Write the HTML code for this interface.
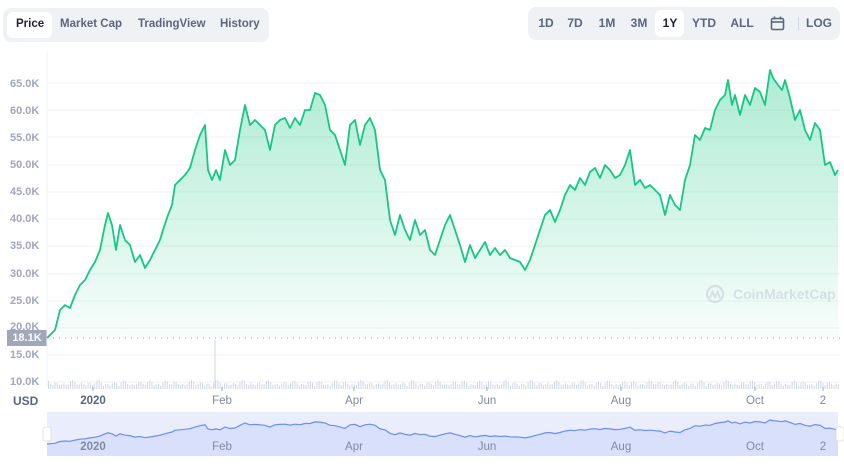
<!DOCTYPE html>
<html><head><style>
body{margin:0;width:844px;height:464px;background:#fff;font-family:"Liberation Sans",sans-serif;overflow:hidden;position:relative}
.tabs{position:absolute;left:3px;top:8px;height:34px;width:266px;background:#eff2f5;border-radius:8px}
.tabs span{position:absolute;top:16px;font-size:11.5px;font-weight:bold;color:#58667e;transform:translateY(-50%)}
.sel{position:absolute;background:#fff;border-radius:6px}
.rt{position:absolute;left:528px;top:7px;width:312px;height:33px;background:#eff2f5;border-radius:8px}
.rt span{position:absolute;top:16px;font-size:12px;font-weight:bold;color:#58667e;transform:translate(-50%,-50%)}
.yl{position:absolute;left:10px;font-size:11px;color:#a1a7bb;font-weight:bold;transform:translateY(-50%)}
.xl{position:absolute;top:395px;font-size:11.5px;color:#808a9d;transform:translateX(-50%)}
</style></head><body>
<div class="tabs">
<div class="sel" style="left:4px;top:4px;width:45px;height:26px"></div>
<span style="left:13px;color:#222531">Price</span>
<span style="left:57px">Market Cap</span>
<span style="left:135px">TradingView</span>
<span style="left:217px">History</span>
</div>
<div class="rt">
<div class="sel" style="left:127px;top:3px;width:29px;height:27px"></div>
<span style="left:18px">1D</span><span style="left:47px">7D</span><span style="left:79px">1M</span><span style="left:111px">3M</span><span style="left:142px;color:#222531">1Y</span><span style="left:176px">YTD</span><span style="left:214px">ALL</span>
<svg style="position:absolute;left:242px;top:9px" width="15" height="15" viewBox="0 0 15 15" fill="none" stroke="#58667e" stroke-width="1.6"><rect x="1.5" y="2.5" width="12" height="11" rx="1.5"/><line x1="1.5" y1="6" x2="13.5" y2="6"/><line x1="4.5" y1="0.5" x2="4.5" y2="3.5"/><line x1="10.5" y1="0.5" x2="10.5" y2="3.5"/></svg>
<div style="position:absolute;left:270px;top:10px;width:1px;height:13px;background:#cfd6e4"></div>
<span style="left:291px">LOG</span>
</div>
<div class="yl" style="top:84px">65.0K</div><div class="yl" style="top:111px">60.0K</div><div class="yl" style="top:138px">55.0K</div><div class="yl" style="top:165px">50.0K</div><div class="yl" style="top:192px">45.0K</div><div class="yl" style="top:219px">40.0K</div><div class="yl" style="top:246px">35.0K</div><div class="yl" style="top:274px">30.0K</div><div class="yl" style="top:301px">25.0K</div><div class="yl" style="top:327px">20.0K</div><div class="yl" style="top:355px">15.0K</div><div class="yl" style="top:382px">10.0K</div>
<div style="position:absolute;left:7px;top:330px;width:40px;height:16px;background:#a1a7bb;color:#fff;font-size:11px;font-weight:bold;line-height:16px;text-align:center">18.1K</div>
<div style="position:absolute;left:13px;top:394px;font-size:12px;font-weight:bold;color:#58667e">USD</div>
<svg id="ch" style="position:absolute;left:0;top:0" width="844" height="464">
<defs><linearGradient id="g" x1="0" y1="0" x2="0" y2="1"><stop offset="0" stop-color="#16c784" stop-opacity="0.35"/><stop offset="1" stop-color="#16c784" stop-opacity="0.03"/></linearGradient></defs>
<line x1="47" y1="52" x2="47" y2="386" stroke="#eff2f5"/>
<g stroke="#eff2f5" id="grid"></g>
<path id="area" fill="url(#g)"/>
<path id="line" fill="none" stroke="#16c784" stroke-width="1.8" stroke-linejoin="round"/>
<line x1="47" y1="338" x2="840" y2="338" stroke="#a1a7bb" stroke-dasharray="1 5"/>
<line x1="215" y1="340" x2="215" y2="388" stroke="#cfd6e4"/>
<g id="vol" fill="#cfd6e4"></g>
<g stroke="#a1a7bb"><line x1="93" y1="387" x2="93" y2="391"/><line x1="222" y1="387" x2="222" y2="391"/><line x1="354" y1="387" x2="354" y2="391"/><line x1="487" y1="387" x2="487" y2="391"/><line x1="621" y1="387" x2="621" y2="391"/><line x1="755" y1="387" x2="755" y2="391"/><line x1="823" y1="387" x2="823" y2="391"/></g>
<rect x="47" y="412" width="791" height="44" fill="#e9edfc"/>
<path id="navf" fill="#d9e0fb"/>
<path id="nav" fill="none" stroke="#6b8ef5" stroke-width="1.2"/>
<rect x="43" y="427" width="8" height="14" rx="2" fill="#fff" stroke="#ccc" stroke-width="0.5"/>
<rect x="836" y="427" width="8" height="14" rx="2" fill="#fff" stroke="#ccc" stroke-width="0.5"/>
<g font-family="Liberation Sans,sans-serif" font-size="11.5" fill="#808a9d" text-anchor="middle"><text x="93" y="450" font-weight="bold">2020</text><text x="222" y="450">Feb</text><text x="354" y="450">Apr</text><text x="487" y="450">Jun</text><text x="621" y="450">Aug</text><text x="755" y="450">Oct</text><text x="823" y="450">2</text></g>
<g opacity="0.5"><circle cx="715" cy="294" r="8" fill="none" stroke="#bfc6d4" stroke-width="2.2"/><path d="M710 298 l2.5-6 2.5 5 2.5-5 2.5 6" fill="none" stroke="#bfc6d4" stroke-width="2"/><text x="733" y="299" font-family="Liberation Sans,sans-serif" font-size="14" font-weight="bold" fill="#bfc6d4">CoinMarketCap</text></g>
</svg>
<div class="xl" style="left:93px;font-weight:bold;color:#58667e">2020</div><div class="xl" style="left:222px">Feb</div><div class="xl" style="left:354px">Apr</div><div class="xl" style="left:487px">Jun</div><div class="xl" style="left:621px">Aug</div><div class="xl" style="left:755px">Oct</div><div class="xl" style="left:823px">2</div>
<script>
var p=[47,338,55,330,60,310,65,305,70,308,75,295,80,285,85,280,90,270,95,262,100,250,105,225,108,213,112,225,116,250,120,225,125,240,130,245,135,262,140,255,145,268,150,260,155,250,160,240,163,230,168,215,172,205,175,185,180,180,185,175,190,168,195,150,200,135,205,125,208,170,212,180,216,170,220,180,225,150,230,165,235,160,240,130,245,105,250,125,255,120,260,125,265,130,270,150,275,125,280,120,285,118,290,128,295,118,300,125,305,110,310,110,315,93,320,95,325,105,330,130,335,135,340,150,345,165,350,125,355,120,360,145,365,125,370,118,375,130,380,170,385,180,390,220,395,235,400,215,405,230,410,240,415,220,420,235,425,230,430,250,435,255,440,240,445,225,450,215,455,230,460,245,465,262,470,245,475,258,480,250,485,242,490,255,495,248,500,255,505,250,510,258,515,260,520,262,525,270,530,260,535,245,540,230,545,215,550,210,555,222,560,210,565,195,570,185,575,190,580,178,585,185,590,172,595,168,600,178,605,165,610,170,615,178,620,175,625,165,630,150,635,185,640,180,645,188,650,185,655,190,660,195,665,215,670,195,675,205,680,210,685,180,690,165,695,135,700,140,705,128,710,130,715,110,720,100,725,95,728,80,732,105,735,95,740,115,745,95,750,105,755,88,760,92,765,105,770,70,773,78,778,85,782,90,785,80,790,98,795,120,800,110,805,130,810,140,815,123,820,130,825,165,830,162,835,175,838,170];
var d="M"+p[0]+" "+p[1],n="";
for(var i=2;i<p.length;i+=2){d+=" L"+p[i]+" "+p[i+1];}
document.getElementById('line').setAttribute('d',d);
document.getElementById('area').setAttribute('d',d+" L838 338 L47 338Z");
for(i=0;i<p.length;i+=2){var y=444-(338-p[i+1])*0.09;n+=(i?" L":"M")+p[i]+" "+y.toFixed(1);}
document.getElementById('nav').setAttribute('d',n);
document.getElementById('navf').setAttribute('d',n+" L838 456 L47 456Z");
var g=document.getElementById('grid'),ys=[83,110,137,165,192,219,246,274,301,328,355,382],s='';
ys.forEach(function(y){s+='<line x1="47" y1="'+y+'" x2="840" y2="'+y+'"/>'});g.innerHTML=s;
s='';for(var x=48;x<838;x+=2.2){var h=3+Math.abs(Math.sin(x*0.37)*4+Math.sin(x*0.11)*2);s+='<rect x="'+x.toFixed(1)+'" y="'+(389-h).toFixed(1)+'" width="1" height="'+h.toFixed(1)+'"/>';}
document.getElementById('vol').innerHTML=s;
</script>
</body></html>
